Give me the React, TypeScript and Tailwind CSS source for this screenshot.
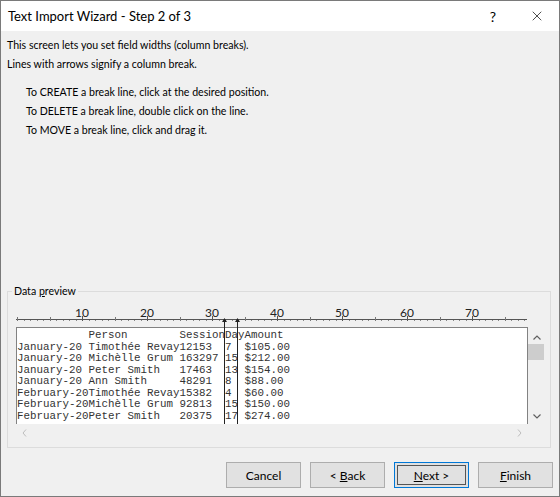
import { X } from 'lucide-react';

const rows = [
  '           Person        SessionDayAmount',
  'January-20 Timothée Revay12153  7  $105.00',
  'January-20 Michèlle Grum 163297 15 $212.00',
  'January-20 Peter Smith   17463  13 $154.00',
  'January-20 Ann Smith     48291  8  $88.00',
  'February-20Timothée Revay15382  4  $60.00',
  'February-20Michèlle Grum 92813  15 $150.00',
  'February-20Peter Smith   20375  17 $274.00',
];

const CH = 6.5;
const cols = Array.from({ length: 79 }, (_, i) => i);

function Ruler() {
  return (
    <div className="relative h-[30px]">
      {[10, 20, 30, 40, 50, 60, 70].map((n) => (
        <span
          key={n}
          className="absolute top-[14px] -translate-x-1/2 text-[12px] leading-[14px] text-[#222]"
          style={{ left: 9 + n * CH }}
        >
          {n}
        </span>
      ))}
      <svg className="absolute left-[8px] top-[22px]" width="512" height="8">
        <line x1="0" y1="5.5" x2="511" y2="5.5" stroke="#555" strokeWidth="1" />
        {cols.map((i) => {
          const x = Math.round(1 + i * CH) + 0.5;
          if (i % 10 === 0 && i > 0) return <line key={i} x1={x} y1="2" x2={x} y2="7" stroke="#555" />;
          if (i % 5 === 0) return <line key={i} x1={x} y1="3" x2={x} y2="7" stroke="#777" />;
          return <line key={i} x1={x} y1="6" x2={x} y2="7" stroke="#888" />;
        })}
      </svg>
    </div>
  );
}

function BreakLine({ left }: { left: string }) {
  return (
    <div className={`absolute top-[26px] h-[106px] w-[5px] ${left}`}>
      <svg width="5" height="106" className="block">
        <path d="M2.5 0 L5 4 L0 4 Z" fill="#222" />
        <line x1="2.5" y1="3" x2="2.5" y2="106" stroke="#222" strokeWidth="1" />
      </svg>
    </div>
  );
}

function Button({ label, focused }: { label: React.ReactNode; focused?: boolean }) {
  return (
    <button
      type="button"
      className={`relative w-[75px] h-[26px] bg-[#e1e1e1] border text-[12px] text-black ${
        focused ? 'border-[#0078d7]' : 'border-[#adadad]'
      }`}
    >
      {focused && <span className="absolute inset-[2px] border border-[#555]" />}
      <span className="relative">{label}</span>
    </button>
  );
}

export default function App() {
  return (
    <div
      className="w-[560px] h-[497px] flex flex-col border border-[#7a7a7a] bg-[#f0f0f0] text-black"
      style={{ fontFamily: '"Segoe UI", Lato, sans-serif' }}
    >
      <div className="h-[30px] shrink-0 bg-white flex items-center pl-[7px] pr-[14px]">
        <span className="text-[13px] flex-1 pt-[2px]">Text Import Wizard - Step 2 of 3</span>
        <span className="text-[14px] mr-[33px]">?</span>
        <X className="w-[16px] h-[16px] text-[#222]" strokeWidth={1.2} />
      </div>

      <div className="flex-1 flex flex-col px-[6px] pb-[8px] text-[10.6px] leading-[19px]">
        <div className="pt-[5px]">
          <p>This screen lets you set field widths (column breaks).</p>
          <p>Lines with arrows signify a column break.</p>
          <div className="mt-[9px] pl-[19px]">
            <p>To CREATE a break line, click at the desired position.</p>
            <p>To DELETE a break line, double click on the line.</p>
            <p>To MOVE a break line, click and drag it.</p>
          </div>
        </div>

        <div className="mt-auto relative w-[544px] h-[157px] border border-[#dcdcdc]">
          <span className="absolute left-[4px] -top-[10px] px-[2px] bg-[#f0f0f0] leading-[18px]">
            Data <span className="underline">p</span>review
          </span>
          <Ruler />
          <div className="ml-[8px] mt-[5px] flex">
            <div className="flex flex-col w-[512px]">
              <div className="h-[97px] bg-white border-l border-t border-r border-[#828282] overflow-hidden pt-[2px]">
                {rows.map((r, i) => (
                  <div
                    key={i}
                    className="whitespace-pre text-[10.83px] leading-[11.5px] text-[#333]"
                    style={{ fontFamily: '"Liberation Mono", monospace' }}
                  >
                    {r}
                  </div>
                ))}
              </div>
              <div className="h-[17px] flex items-center justify-between px-[6px]">
                <svg width="5" height="8"><path d="M4 0.5 L1 4 L4 7.5" fill="none" stroke="#bdbdbd" strokeWidth="1" /></svg>
                <svg width="5" height="8"><path d="M1 0.5 L4 4 L1 7.5" fill="none" stroke="#bdbdbd" strokeWidth="1" /></svg>
              </div>
            </div>
            <div className="w-[18px] h-[97px] flex flex-col items-center">
              <svg width="8" height="5" className="mt-[8px]"><path d="M0.5 4.5 L4 1 L7.5 4.5" fill="none" stroke="#606060" strokeWidth="1.2" /></svg>
              <div className="mt-[4px] w-[16px] h-[16px] bg-[#cdcdcd] self-start" />
              <svg width="8" height="5" className="mt-auto mb-[5px]"><path d="M0.5 0.5 L4 4 L7.5 0.5" fill="none" stroke="#606060" strokeWidth="1.2" /></svg>
            </div>
          </div>
          <BreakLine left="left-[214px]" />
          <BreakLine left="left-[227px]" />
        </div>

        <div className="mt-[14px] flex justify-end gap-[9px]">
          <Button label="Cancel" />
          <Button label={<>&lt; <span className="underline">B</span>ack</>} />
          <Button label={<><span className="underline">N</span>ext &gt;</>} focused />
          <Button label={<><span className="underline">F</span>inish</>} />
        </div>
      </div>
    </div>
  );
}
